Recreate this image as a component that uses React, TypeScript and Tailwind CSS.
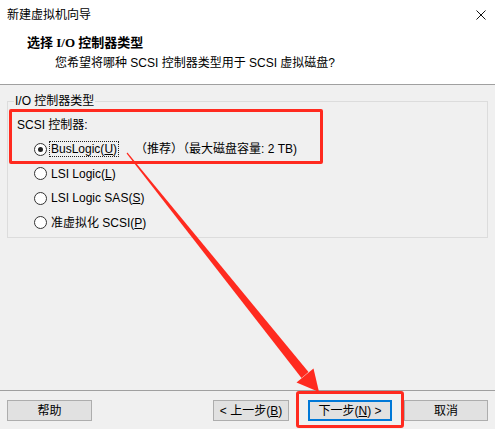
import { ReactNode } from "react";

const font = { fontFamily: '"Liberation Sans", "Noto Sans CJK SC", sans-serif' };

interface IRadioRow {
  checked?: boolean;
  children: ReactNode;
}

const RadioRow = ({ checked, children }: IRadioRow) => (
  <div className="flex items-center h-[24.5px] pl-[26px]">
    <span className="flex justify-center items-center w-[13px] h-[13px] rounded-full border border-[#333] bg-white shrink-0">
      {checked && <span className="w-[5px] h-[5px] rounded-full bg-[#222]" />}
    </span>
    <div className="ml-[2px] flex items-center">{children}</div>
  </div>
);

const Btn = ({ children, w, focus }: { children: ReactNode; w: string; focus?: boolean }) => (
  <div
    className={`${w} h-[21px] flex justify-center items-center bg-[#e1e1e1] text-[12px] text-black ${
      focus ? "border-2 border-[#0078d7]" : "border border-[#adadad]"
    }`}
  >
    {children}
  </div>
);

export default function App() {
  return (
    <div
      className="relative w-[495px] h-[429px] flex flex-col bg-[#f0f0f0] text-[12px] text-black overflow-hidden"
      style={font}
    >
      {/* title bar */}
      <div className="flex justify-between items-center h-[29px] bg-white pl-[7px] pr-[9px]">
        <span className="leading-none">新建虚拟机向导</span>
        <svg width="10" height="10" viewBox="0 0 10 10">
          <path d="M0.5 0.5 L9.5 9.5 M9.5 0.5 L0.5 9.5" stroke="#111" strokeWidth="1" />
        </svg>
      </div>

      {/* header */}
      <div className="flex flex-col h-[56px] bg-white border-b border-[#a0a0a0]">
        <div
          className="mt-[6px] ml-[27px] h-[16px] leading-[16px] font-bold text-[13px]"
          style={{ fontFamily: '"Liberation Serif", "Noto Sans CJK SC", serif' }}
        >
          选择 I/O 控制器类型
        </div>
        <div className="mt-[4px] ml-[55px] h-[16px] leading-[16px]">
          您希望将哪种 SCSI 控制器类型用于 SCSI 虚拟磁盘?
        </div>
      </div>

      {/* body */}
      <div className="flex-1 px-[7px] pt-[8px]">
        <fieldset className="border border-[#dcdcdc] pb-[2px] w-[481px]">
          <legend className="ml-[6px] px-[1px] leading-[16px]">I/O 控制器类型</legend>
          <div className="pt-[3px]">
            <div className="flex items-center h-[25px] pl-[9px]">SCSI 控制器:</div>
            <RadioRow checked>
              <span className="w-[86px] flex">
                <span className="border border-dotted border-[#222] px-[1px] leading-[14px]">
                  BusLogic(<u>U</u>)
                </span>
              </span>
              <span>（推荐）（最大磁盘容量: 2 TB)</span>
            </RadioRow>
            <RadioRow>
              <span className="pl-[2px]">
                LSI Logic(<u>L</u>)
              </span>
            </RadioRow>
            <RadioRow>
              <span className="pl-[2px]">
                LSI Logic SAS(<u>S</u>)
              </span>
            </RadioRow>
            <RadioRow>
              <span className="pl-[2px]">
                准虚拟化 SCSI(<u>P</u>)
              </span>
            </RadioRow>
          </div>
        </fieldset>
      </div>

      {/* footer */}
      <div className="h-[39px] border-t border-[#a0a0a0] flex items-start pt-[9px] px-[7px]">
        <Btn w="w-[85px]">帮助</Btn>
        <div className="ml-auto flex">
          <Btn w="w-[76px]">
            &lt; 上一步(<u>B</u>)
          </Btn>
          <div className="ml-[19px]">
            <Btn w="w-[84px]" focus>
              下一步(<u>N</u>) &gt;
            </Btn>
          </div>
          <div className="ml-[12px]">
            <Btn w="w-[84px]">取消</Btn>
          </div>
        </div>
      </div>

      {/* annotations */}
      <div className="absolute left-[9px] top-[109px] w-[314px] h-[55px] border-[3px] border-[#ff2a1f] rounded-[2px]" />
      <div className="absolute left-[296px] top-[391px] w-[108px] h-[37px] border-[3px] border-[#ff2a1f] rounded-[3px]" />
      <svg className="absolute left-0 top-0" width="495" height="429" viewBox="0 0 495 429">
        <polygon points="126.6,153.4 127.4,152.6 308.5,372.1 301.5,377.9" fill="#ff2a1f" />
        <polygon points="319,392 296.5,382.5 313.5,368.5" fill="#ff2a1f" />
      </svg>
    </div>
  );
}
